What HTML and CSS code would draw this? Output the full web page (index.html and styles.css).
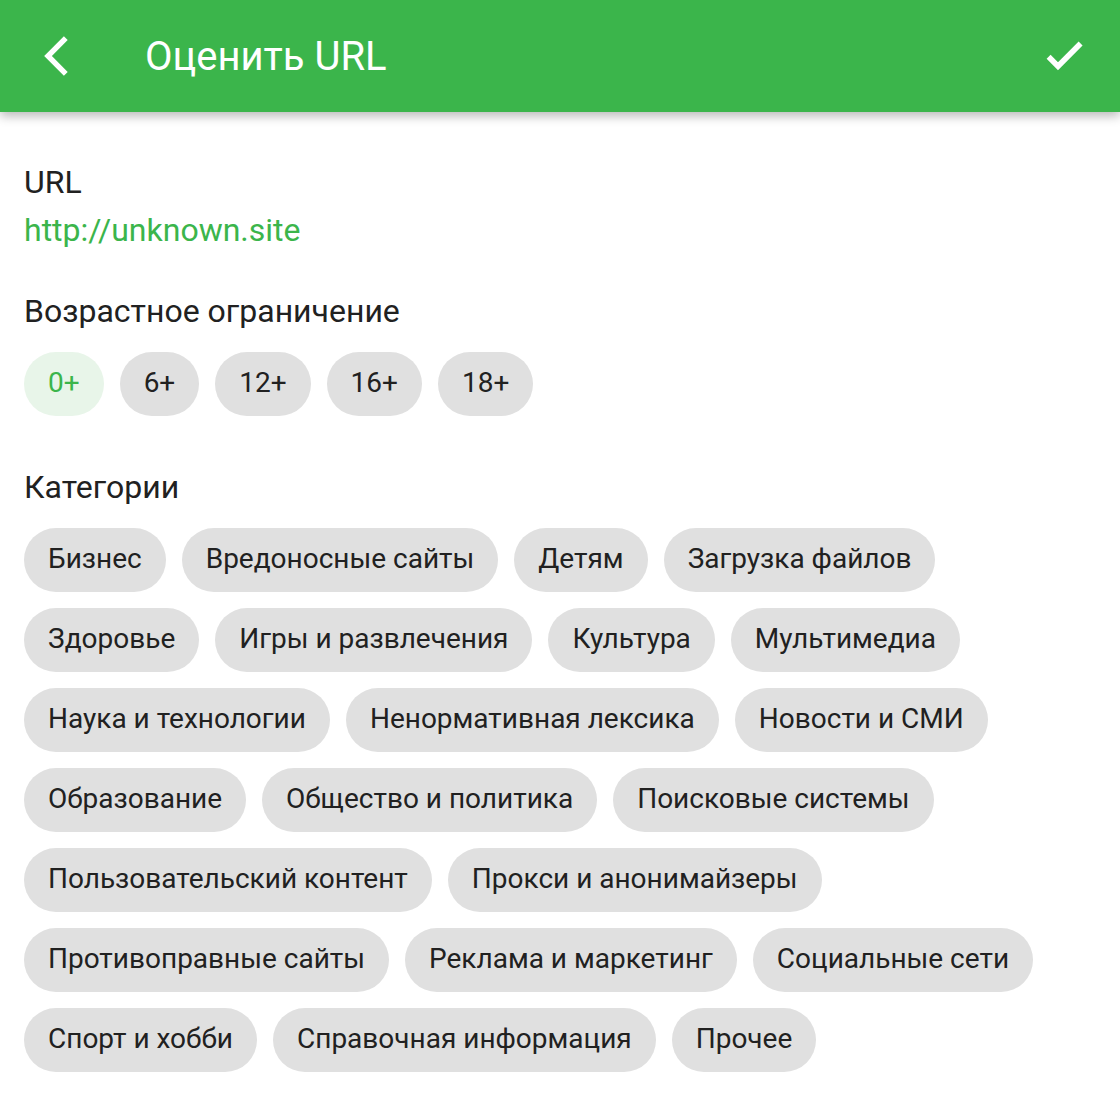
FILE: index.html
```html
<!DOCTYPE html>
<html lang="ru">
<head>
<meta charset="utf-8">
<title>Оценить URL</title>
<link rel="stylesheet" href="styles.css">
</head>
<body>
<header class="toolbar">
  <button class="icon-btn" aria-label="Назад">
    <svg width="48" height="48" viewBox="0 0 24 24"><path fill="none" stroke="#fff" stroke-width="2.7" stroke-linejoin="miter" d="M16.9 3.1L8 12l8.9 8.9"/></svg>
  </button>
  <h1 class="title">Оценить URL</h1>
  <button class="icon-btn" aria-label="Готово">
    <svg width="48" height="48" viewBox="0 0 24 24"><path fill="none" stroke="#fff" stroke-width="2.8" stroke-linejoin="miter" d="M4.3 12.4L9 17.1 20.3 5.8"/></svg>
  </button>
</header>
<main class="content">
  <div class="label url-label">URL</div>
  <a class="url" href="#">http://unknown.site</a>

  <div class="label section-label">Возрастное ограничение</div>
  <div class="chips">
    <span class="chip selected">0+</span>
    <span class="chip">6+</span>
    <span class="chip">12+</span>
    <span class="chip">16+</span>
    <span class="chip">18+</span>
  </div>

  <div class="label section-label cat-label">Категории</div>
  <div class="chips">
    <span class="chip">Бизнес</span>
    <span class="chip">Вредоносные сайты</span>
    <span class="chip">Детям</span>
    <span class="chip">Загрузка файлов</span>
    <span class="chip">Здоровье</span>
    <span class="chip">Игры и развлечения</span>
    <span class="chip">Культура</span>
    <span class="chip">Мультимедиа</span>
    <span class="chip">Наука и технологии</span>
    <span class="chip">Ненормативная лексика</span>
    <span class="chip">Новости и СМИ</span>
    <span class="chip">Образование</span>
    <span class="chip">Общество и политика</span>
    <span class="chip">Поисковые системы</span>
    <span class="chip">Пользовательский контент</span>
    <span class="chip">Прокси и анонимайзеры</span>
    <span class="chip">Противоправные сайты</span>
    <span class="chip">Реклама и маркетинг</span>
    <span class="chip">Социальные сети</span>
    <span class="chip">Спорт и хобби</span>
    <span class="chip">Справочная информация</span>
    <span class="chip">Прочее</span>
  </div>
</main>
</body>
</html>
```

FILE: styles.css
```css
* { box-sizing: border-box; }

html, body {
  margin: 0;
  padding: 0;
  background: #ffffff;
  font-family: Roboto, "Noto Sans", sans-serif;
  color: #212121;
}

.toolbar {
  height: 112px;
  background: #3bb54b;
  display: flex;
  align-items: center;
  padding: 0 32px;
  box-shadow: 0 4px 10px rgba(0, 0, 0, 0.28);
  position: relative;
}

.icon-btn {
  width: 48px;
  height: 48px;
  padding: 0;
  border: 0;
  background: none;
  display: flex;
}

.title {
  flex: 1;
  margin: 0 0 0 65px;
  font-size: 40px;
  font-weight: 400;
  color: #ffffff;
  line-height: 48px;
  padding-top: 2px;
}

.content {
  padding: 51px 24px 0;
}

.label {
  font-size: 32px;
  line-height: 38px;
  color: #212121;
}

.url {
  display: block;
  margin-top: 10px;
  font-size: 32px;
  line-height: 38px;
  color: #3bb54b;
  text-decoration: none;
}

.section-label {
  margin-top: 43px;
  margin-bottom: 22px;
}

.cat-label {
  margin-top: 52px;
}

.chips {
  display: flex;
  flex-wrap: wrap;
  gap: 16px;
}

.chip {
  height: 64px;
  padding: 0 24px 3px;
  border-radius: 32px;
  background: #e0e0e0;
  font-size: 28px;
  line-height: 61px;
  color: #212121;
  white-space: nowrap;
}

.chip.selected {
  background: #e8f5e9;
  color: #3bb54b;
}
```
